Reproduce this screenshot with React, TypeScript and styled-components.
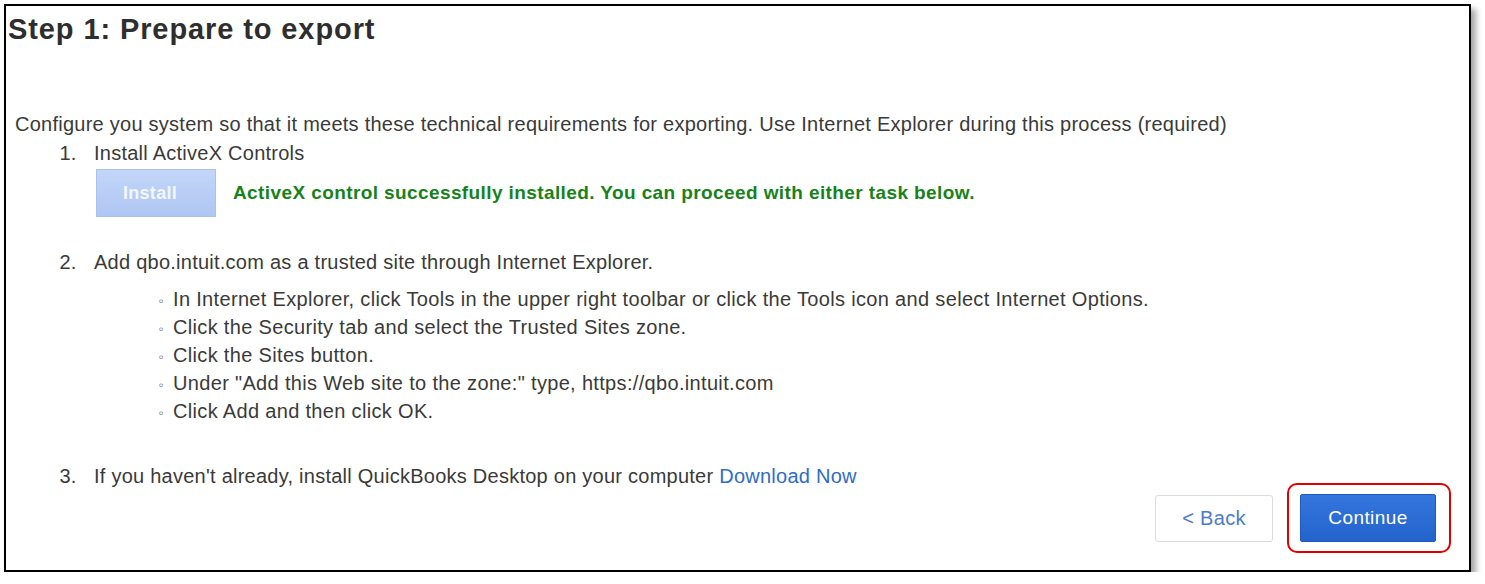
import React from 'react';
import styled, { createGlobalStyle } from 'styled-components';

const GlobalStyle = createGlobalStyle`
  html, body {
    margin: 0;
    padding: 0;
    background: #fff;
  }
  body {
    font-family: 'Liberation Sans', Arial, sans-serif;
    color: #3a3a3a;
  }
`;

const Frame = styled.div`
  box-sizing: border-box;
  width: 1467px;
  height: 568px;
  margin: 4px 0 0 4px;
  border: 2px solid #000;
  box-shadow: 5px 5px 6px rgba(0, 0, 0, 0.35);
  background: #fff;
  display: flex;
  flex-direction: column;
  font-size: 20px;
  line-height: 28px;
  letter-spacing: 0.25px;
`;

const Title = styled.h1`
  margin: 7px 0 0 2px;
  font-size: 29px;
  line-height: 32px;
  letter-spacing: 0.9px;
  font-weight: bold;
  color: #2e2e2e;
`;

const Intro = styled.p`
  margin: 65px 0 0 9px;
`;

const Steps = styled.ol`
  margin: 1px 0 0 0;
  padding-left: 88px;
`;

const Step = styled.li<{ gap?: number }>`
  margin-top: ${p => p.gap ?? 0}px;
  &::marker {
    content: counter(list-item) ".\\00a0\\00a0\\00a0";
  }
`;

const InstallRow = styled.div`
  display: flex;
  align-items: center;
  gap: 17px;
  margin: 2px 0 0 2px;
`;

const InstallButton = styled.button`
  width: 120px;
  height: 48px;
  padding: 0 12px 0 0;
  border: 1px solid #a9c1ec;
  background: linear-gradient(#c3d6f8, #aec6f2);
  color: #f2f6fd;
  font-family: inherit;
  font-size: 18px;
  letter-spacing: 0.3px;
  font-weight: bold;
  cursor: default;
`;

const Success = styled.span`
  color: #17821a;
  font-weight: bold;
  font-size: 19px;
  letter-spacing: 0.4px;
`;

const SubList = styled.ul`
  margin: 9px 0 0 0;
  padding-left: 79px;
  letter-spacing: 0.33px;
`;

const SubItem = styled.li`
  &::marker {
    content: "\\25E6\\00a0\\00a0";
    font-size: 15px;
    color: #808080;
  }
`;

const Link = styled.a`
  color: #2f6cc9;
  text-decoration: none;
`;

const Footer = styled.div`
  display: flex;
  justify-content: flex-end;
  align-items: center;
  gap: 14px;
  margin-top: -7px;
  padding-right: 18px;
`;

const BackButton = styled.button`
  width: 118px;
  height: 47px;
  border: 1px solid #dcdcdc;
  border-radius: 3px;
  background: #fff;
  color: #4b7bcb;
  font-family: inherit;
  font-size: 20px;
  letter-spacing: 0.3px;
`;

const Highlight = styled.div`
  border: 2px solid #e00000;
  border-radius: 10px;
  padding: 9px 13px 9px 11px;
`;

const ContinueButton = styled.button`
  width: 136px;
  height: 48px;
  border: 1px solid #1f59bd;
  border-radius: 2px;
  background: linear-gradient(#3476de, #2463cc);
  color: #fff;
  font-family: inherit;
  font-size: 19px;
  letter-spacing: 0.4px;
`;

export default function App() {
  return (
    <>
      <GlobalStyle />
      <Frame>
        <Title>Step 1: Prepare to export</Title>
        <Intro>
          Configure you system so that it meets these technical requirements for exporting. Use Internet
          Explorer during this process (required)
        </Intro>
        <Steps>
          <Step>
            Install ActiveX Controls
            <InstallRow>
              <InstallButton>Install</InstallButton>
              <Success>ActiveX control successfully installed. You can proceed with either task below.</Success>
            </InstallRow>
          </Step>
          <Step gap={31}>
            Add qbo.intuit.com as a trusted site through Internet Explorer.
            <SubList>
              <SubItem>
                In Internet Explorer, click Tools in the upper right toolbar or click the Tools icon and select
                Internet Options.
              </SubItem>
              <SubItem>Click the Security tab and select the Trusted Sites zone.</SubItem>
              <SubItem>Click the Sites button.</SubItem>
              <SubItem>Under "Add this Web site to the zone:" type, https://qbo.intuit.com</SubItem>
              <SubItem>Click Add and then click OK.</SubItem>
            </SubList>
          </Step>
          <Step gap={37}>
            If you haven't already, install QuickBooks Desktop on your computer <Link href="#">Download Now</Link>
          </Step>
        </Steps>
        <Footer>
          <BackButton>&lt; Back</BackButton>
          <Highlight>
            <ContinueButton>Continue</ContinueButton>
          </Highlight>
        </Footer>
      </Frame>
    </>
  );
}
